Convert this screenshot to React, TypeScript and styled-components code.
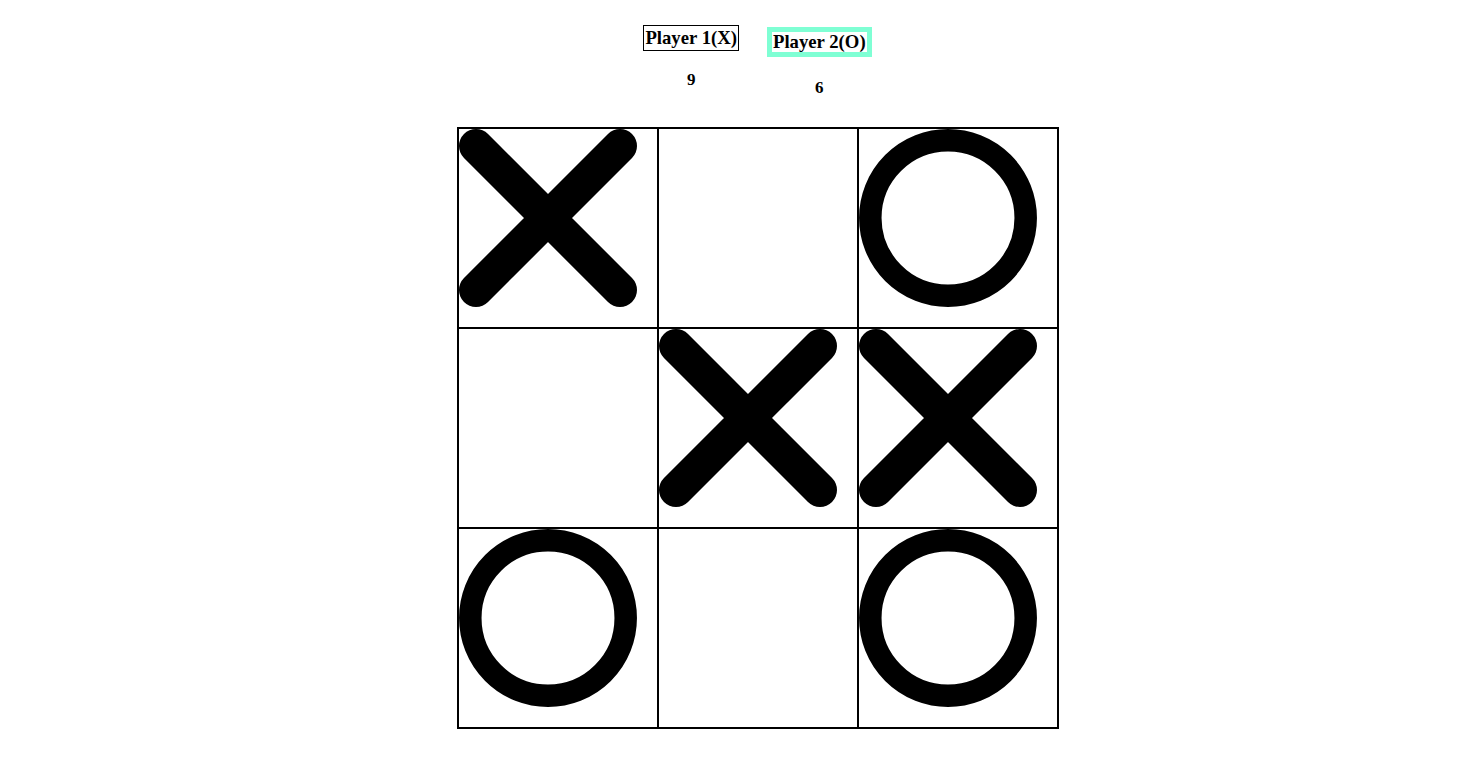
import React from "react";
import styled, { createGlobalStyle } from "styled-components";

const GlobalStyle = createGlobalStyle`
  body {
    margin: 0;
    background: #ffffff;
    font-family: "Liberation Serif", "Times New Roman", serif;
    color: #000000;
  }
`;

const Page = styled.div`
  display: flex;
  flex-direction: column;
  align-items: center;
  padding: 25px 0 0 53px;
`;

const Scoreboard = styled.div`
  display: flex;
  align-items: flex-start;
  gap: 28px;
`;

const PlayerColumn = styled.div`
  display: flex;
  flex-direction: column;
  align-items: center;
`;

const PlayerTag = styled.h3<{ $active?: boolean }>`
  margin: ${(p) => (p.$active ? "2px 0 0" : "0")};
  font-size: 18.72px;
  font-weight: bold;
  line-height: ${(p) => (p.$active ? "20px" : "24px")};
  padding: 0 1px;
  border: ${(p) => (p.$active ? "5px solid #7fffd4" : "1px solid #000000")};
  white-space: nowrap;
`;

const Score = styled.div<{ $active?: boolean }>`
  margin-top: ${(p) => (p.$active ? "21px" : "19px")};
  font-size: 17px;
  font-weight: bold;
  line-height: 19px;
`;

const Board = styled.div`
  margin-top: 30px;
  display: grid;
  grid-template-columns: repeat(3, 200px);
  grid-template-rows: repeat(3, 200px);
  border: 1px solid #000000;
`;

const Cell = styled.div`
  box-sizing: border-box;
  border: 1px solid #000000;
  width: 200px;
  height: 200px;
`;

const Mark = styled.svg`
  display: block;
  width: 178px;
  height: 178px;
`;

type Value = "X" | "O" | null;

const board: Value[] = ["X", null, "O", null, "X", "X", "O", null, "O"];

const Cross = () => (
  <Mark viewBox="0 0 178 178">
    <path
      d="M17 17 L161 161 M161 17 L17 161"
      stroke="#000"
      strokeWidth={34}
      strokeLinecap="round"
      fill="none"
    />
  </Mark>
);

const Nought = () => (
  <Mark viewBox="0 0 178 178">
    <circle cx={89} cy={89} r={77.7} stroke="#000" strokeWidth={22.5} fill="none" />
  </Mark>
);

export default function App() {
  return (
    <>
      <GlobalStyle />
      <Page>
        <Scoreboard>
          <PlayerColumn>
            <PlayerTag>Player 1(X)</PlayerTag>
            <Score>9</Score>
          </PlayerColumn>
          <PlayerColumn>
            <PlayerTag $active>Player 2(O)</PlayerTag>
            <Score $active>6</Score>
          </PlayerColumn>
        </Scoreboard>
        <Board>
          {board.map((v, i) => (
            <Cell key={i}>
              {v === "X" && <Cross />}
              {v === "O" && <Nought />}
            </Cell>
          ))}
        </Board>
      </Page>
    </>
  );
}
